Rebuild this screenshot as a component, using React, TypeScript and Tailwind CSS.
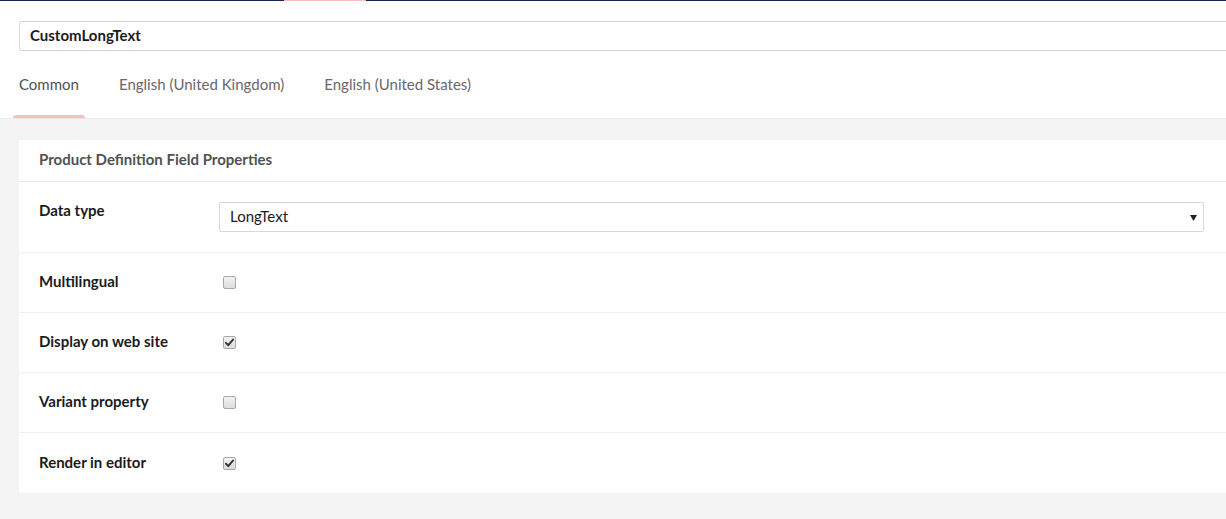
import React from "react";

function Check({ checked }: { checked: boolean }) {
  return (
    <span className="inline-flex h-[13px] w-[13px] items-center justify-center rounded-[2px] border border-[#a8a8a8] bg-gradient-to-b from-[#f2f2f2] to-[#dcdcdc]">
      {checked && (
        <svg width="9" height="9" viewBox="0 0 9 9">
          <path d="M1 4.8 L3.3 7.2 L8 1.6" fill="none" stroke="#333" strokeWidth="1.9" strokeLinecap="round" strokeLinejoin="round" />
        </svg>
      )}
    </span>
  );
}

function Row({ label, checked, last }: { label: string; checked: boolean; last?: boolean }) {
  return (
    <div className={`flex h-[60px] items-center pl-[20px] ${last ? "" : "border-b border-[#f0f0f0]"}`}>
      <div className="-mt-[2px] w-[180px] text-[15px] font-bold text-[#1b1b1b]">{label}</div>
      <div className="flex pl-[4px]">
        <Check checked={checked} />
      </div>
    </div>
  );
}

export default function App() {
  return (
    <div className="h-[519px] w-[1226px] overflow-hidden bg-[#f5f4f4]" style={{ fontFamily: "Lato, 'Noto Sans', sans-serif" }}>
      <div className="relative h-px bg-[#1b264f]">
        <div className="absolute left-[284px] top-0 h-px w-[82px] bg-[#f5c1bc]" />
      </div>
      <div className="border-b border-[#e9e9eb] bg-white">
        <div className="pl-[19px] pt-[20px]">
          <div className="-mr-8 flex h-[30px] items-center rounded-[2px] border border-[#d8d7d9] px-[10px] text-[15px] font-bold text-[#1b1b1b]">
            <span className="-mt-[2px]">CustomLongText</span>
          </div>
        </div>
        <div className="flex h-[67px] pl-[13px] pt-[22px] text-[15px] text-[#68676b]">
          <div className="relative px-[6px] text-[#515151]">
            <span>Common</span>
            <div className="absolute bottom-0 left-0 right-0 h-[3px] rounded-t-[3px] bg-[#f5c1bc]" />
          </div>
          <div className="ml-[28px] px-[6px]">English (United Kingdom)</div>
          <div className="ml-[28px] px-[6px]">English (United States)</div>
        </div>
      </div>
      <div className="-mr-8 ml-[19px] mt-[21px] bg-white">
        <div className="flex h-[42px] items-center border-b border-[#e9e9eb] pl-[20px] text-[15px] font-bold text-[#515151]">
          <span className="-mt-[2px]">Product Definition Field Properties</span>
        </div>
        <div className="flex h-[71px] border-b border-[#f0f0f0] pl-[20px] pt-[20px]">
          <div className="-mt-px w-[180px] text-[15px] font-bold leading-[18px] text-[#1b1b1b]">Data type</div>
          <div className="relative flex h-[30px] w-[985px] items-center rounded-[2px] border border-[#d8d7d9] pl-[10px] text-[15px] text-[#1b1b1b]">
            <span className="-mt-px">LongText</span>
            <svg className="absolute right-[6px] top-[12px]" width="7" height="6" viewBox="0 0 7 6">
              <path d="M0 0 H7 L3.5 6 Z" fill="#222" />
            </svg>
          </div>
        </div>
        <Row label="Multilingual" checked={false} />
        <Row label="Display on web site" checked={true} />
        <Row label="Variant property" checked={false} />
        <Row label="Render in editor" checked={true} last />
      </div>
    </div>
  );
}
